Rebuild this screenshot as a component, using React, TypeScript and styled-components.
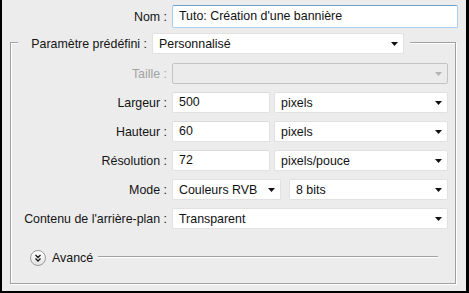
import styled, { createGlobalStyle } from "styled-components";

const GlobalStyle = createGlobalStyle`
  html, body {
    margin: 0;
    padding: 0;
    background: #ececec;
  }
  body {
    font-family: "Liberation Sans", Arial, sans-serif;
    font-size: 12.4px;
    color: #141414;
  }
  * {
    box-sizing: border-box;
  }
`;

const Window = styled.div`
  width: 469px;
  height: 293px;
  background: #ececec;
  border-left: 2px solid #000;
  border-right: 3px solid #000;
  border-bottom: 2px solid #000;
  padding-top: 5px;
  display: flex;
  flex-direction: column;
`;

const Row = styled.div`
  display: flex;
  align-items: center;
  gap: 5px;
`;

const Label = styled.span<{ $width: number; $muted?: boolean }>`
  width: ${(p) => p.$width}px;
  flex: none;
  text-align: right;
  white-space: nowrap;
  color: ${(p) => (p.$muted ? "#a3a3a3" : "#141414")};
`;

const TextInput = styled.div<{ $width: number; $focused?: boolean }>`
  width: ${(p) => p.$width}px;
  height: ${(p) => (p.$focused ? 23 : 21)}px;
  line-height: ${(p) => (p.$focused ? 21 : 19)}px;
  padding-left: 6px;
  background: #fff;
  border: 1px solid ${(p) => (p.$focused ? "#a9cfec" : "#e1e1e1")};
  border-top-color: ${(p) => (p.$focused ? "#6b9fd0" : "#dadada")};
  border-radius: 2px;
  white-space: nowrap;
  overflow: hidden;
  color: #111;
`;

const SelectBox = styled.div<{ $width: number; $disabled?: boolean }>`
  width: ${(p) => p.$width}px;
  height: 21px;
  flex: none;
  display: flex;
  align-items: center;
  justify-content: space-between;
  padding: 0 5px 0 6px;
  background: ${(p) => (p.$disabled ? "#ebebeb" : "#fff")};
  border: 1px solid ${(p) => (p.$disabled ? "#c3c3c3" : "#e1e1e1")};
  border-radius: 2px;
  color: #111;
  white-space: nowrap;
`;

const Arrow = styled.svg<{ $disabled?: boolean }>`
  flex: none;
  fill: ${(p) => (p.$disabled ? "#b4b4b4" : "#111")};
`;

function Select({ width, value, disabled }: { width: number; value?: string; disabled?: boolean }) {
  return (
    <SelectBox $width={width} $disabled={disabled}>
      <span>{value}</span>
      <Arrow $disabled={disabled} width="7" height="4" viewBox="0 0 7 4">
        <path d="M0 0 H7 L3.5 4 Z" />
      </Arrow>
    </SelectBox>
  );
}

const Group = styled.fieldset`
  margin: 2px 0 0 8px;
  width: 446px;
  min-width: 0;
  padding: 9px 0 17px 0;
  border: 1px solid #a0a0a0;
  box-shadow: inset 1px 1px 0 #fff, 1px 1px 0 #fff;
`;

const Legend = styled.legend`
  margin-left: 7px;
  padding: 3px 6px 0 0;
  background: #ececec;
`;

const Rows = styled.div`
  display: flex;
  flex-direction: column;
  gap: 8px;
`;

const Controls = styled.div<{ $gap: number }>`
  display: flex;
  gap: ${(p) => p.$gap}px;
`;

const Advanced = styled.div`
  margin-top: 21px;
  height: 16px;
  padding-left: 19px;
  padding-right: 17px;
  display: flex;
  align-items: center;
`;

const AdvancedText = styled.span`
  margin-left: 6px;
  margin-right: 5px;
`;

const Rule = styled.div`
  flex: 1;
  height: 2px;
  border-top: 1px solid #a0a0a0;
  border-bottom: 1px solid #fff;
  margin-top: -2px;
`;

function ExpandIcon() {
  return (
    <svg width="16" height="16" viewBox="0 0 16 16">
      <defs>
        <linearGradient id="exp" x1="0" y1="0" x2="0" y2="1">
          <stop offset="0" stopColor="#ffffff" />
          <stop offset="1" stopColor="#e2e2e2" />
        </linearGradient>
      </defs>
      <circle cx="8" cy="8" r="7.5" fill="url(#exp)" stroke="#9a9a9a" />
      <path d="M5.5 5 L8 7.5 L10.5 5 M5.5 8.5 L8 11 L10.5 8.5" fill="none" stroke="#1a1a1a" strokeWidth="1.3" />
    </svg>
  );
}

export default function App() {
  return (
    <>
      <GlobalStyle />
      <Window>
        <Row>
          <Label $width={165}>Nom :</Label>
          <TextInput $width={286} $focused>Tuto: Création d'une bannière</TextInput>
        </Row>
        <Group>
          <Legend>
            <Row>
              <Label $width={129}>Paramètre prédéfini :</Label>
              <Select width={252} value="Personnalisé" />
            </Row>
          </Legend>
          <Rows>
            <Row>
              <Label $width={156} $muted>Taille :</Label>
              <Select width={276} disabled />
            </Row>
            <Row>
              <Label $width={156}>Largeur :</Label>
              <Controls $gap={4}>
                <TextInput $width={98}>500</TextInput>
                <Select width={174} value="pixels" />
              </Controls>
            </Row>
            <Row>
              <Label $width={156}>Hauteur :</Label>
              <Controls $gap={4}>
                <TextInput $width={98}>60</TextInput>
                <Select width={174} value="pixels" />
              </Controls>
            </Row>
            <Row>
              <Label $width={156}>Résolution :</Label>
              <Controls $gap={4}>
                <TextInput $width={98}>72</TextInput>
                <Select width={174} value="pixels/pouce" />
              </Controls>
            </Row>
            <Row>
              <Label $width={156}>Mode :</Label>
              <Controls $gap={8}>
                <Select width={109} value="Couleurs RVB" />
                <Select width={159} value="8 bits" />
              </Controls>
            </Row>
            <Row>
              <Label $width={156}>Contenu de l'arrière-plan :</Label>
              <Select width={276} value="Transparent" />
            </Row>
          </Rows>
          <Advanced>
            <ExpandIcon />
            <AdvancedText>Avancé</AdvancedText>
            <Rule />
          </Advanced>
        </Group>
      </Window>
    </>
  );
}
